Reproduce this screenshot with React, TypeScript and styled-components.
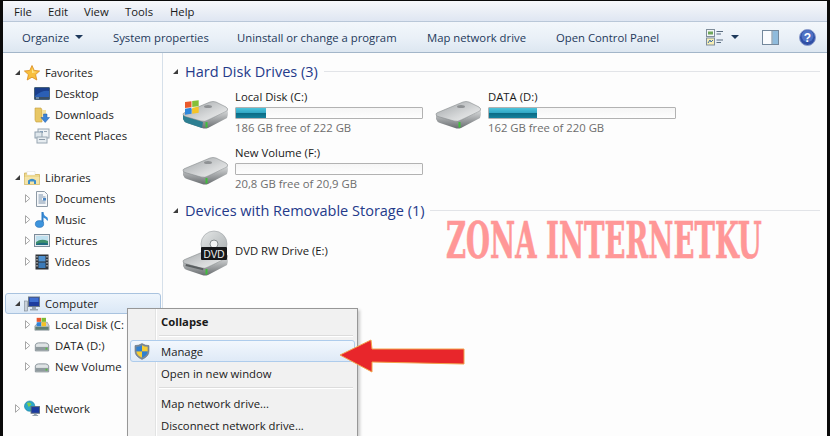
import React from "react";
import styled, { createGlobalStyle } from "styled-components";

const Global = createGlobalStyle`
  html, body { margin: 0; padding: 0; background: #000; }
  body { font-family: "Open Sans", "Noto Sans", "Liberation Sans", sans-serif; font-size: 11.3px; color: #1c1c1c; }
`;

const Window = styled.div`
  position: relative;
  width: 830px;
  height: 436px;
  box-sizing: border-box;
  padding: 1px 3px 0 3px;
  background: #0a0a0a;
  overflow: hidden;
  display: flex;
  flex-direction: column;
`;
const MenuBar = styled.div`
  height: 20px;
  flex: none;
  display: flex;
  align-items: center;
  padding-left: 11px;
  background: linear-gradient(#f7f8fb, #dfe6f2);
  border-bottom: 1px solid #b9c7d8;
`;
const MenuLabel = styled.span<{ $w: number }>`
  width: ${(p) => p.$w}px;
  color: #1a1a1a;
`;
const Toolbar = styled.div`
  height: 31px;
  flex: none;
  display: flex;
  align-items: center;
  box-sizing: border-box;
  padding-left: 19px;
  background: linear-gradient(#f3f7fb, #e9f0f7 55%, #dde7f1);
  border-bottom: 1px solid #a3b6c9;
`;
const ToolButton = styled.span<{ $w: number }>`
  width: ${(p) => p.$w}px;
  flex: none;
  color: #1e395b;
  display: flex;
  align-items: center;
  white-space: nowrap;
`;
const Caret = styled.i<{ $gap: number }>`
  display: inline-block;
  margin-left: ${(p) => p.$gap}px;
  width: 0;
  height: 0;
  border-left: 4px solid transparent;
  border-right: 4px solid transparent;
  border-top: 4px solid #1e395b;
`;
const ToolIcons = styled.div`
  margin-left: 46px;
  display: flex;
  align-items: center;
`;
const ToolGap = styled.span<{ $w: number }>`
  width: ${(p) => p.$w}px;
`;
const Body = styled.div`
  flex: 1;
  display: flex;
  min-height: 0;
  background: #fdfdfd;
`;
const Sidebar = styled.nav`
  width: 159px;
  flex: none;
  border-right: 1px solid #d6e0ea;
  padding-top: 9px;
  display: flex;
  flex-direction: column;
`;
const TreeGroup = styled.div`
  margin-bottom: 21px;
`;
const TreeRow = styled.div<{ $child?: boolean; $selected?: boolean }>`
  height: 21px;
  box-sizing: border-box;
  display: flex;
  align-items: center;
  gap: 3px;
  white-space: nowrap;
  overflow: hidden;
  padding-left: ${(p) => (p.$child ? 18 : 8)}px;
  margin: 0 1px 0 2px;
  border: 1px solid ${(p) => (p.$selected ? "#a9c3df" : "transparent")};
  border-radius: 3px;
  background: ${(p) => (p.$selected ? "linear-gradient(#eef5fc, #dbe8f6)" : "none")};
  & > span { margin-left: 2px; color: #1c1c1c; }
`;
const TreeArrow = styled.svg`
  width: 7px;
  height: 9px;
  flex: none;
`;
const Content = styled.main`
  flex: 1;
  padding: 8px 7px 0 9px;
  min-width: 0;
`;
const SectionHead = styled.div`
  height: 20px;
  display: flex;
  align-items: center;
  gap: 6px;
  color: #243a8a;
  font-size: 14.5px;
  white-space: nowrap;
  &::after { content: ""; flex: 1; height: 1px; background: #e2e4e8; }
`;
const Tiles = styled.div`
  display: grid;
  grid-template-columns: 253px 253px;
  grid-auto-rows: 56px;
  padding: 6px 0 1px 10px;
`;
const Tile = styled.div`
  display: flex;
  gap: 7px;
  align-items: center;
`;
const TileText = styled.div`
  width: 188px;
  display: flex;
  flex-direction: column;
  margin-top: -5px;
`;
const Name = styled.div`
  line-height: 16px;
  margin-bottom: 2px;
  color: #1a1a1a;
`;
const Free = styled.div`
  line-height: 16px;
  margin-top: 1px;
  color: #6d6d6d;
`;
const Bar = styled.div`
  height: 12px;
  box-sizing: border-box;
  border: 1px solid #b2b2b2;
  border-radius: 1px;
  background: linear-gradient(#f5f5f5, #fefefe);
  overflow: hidden;
`;
const BarFill = styled.div`
  height: 100%;
  background: linear-gradient(#4cc4dc 0%, #33a9c6 45%, #0b6c86 55%, #14809c 100%);
`;
const Watermark = styled.div`
  position: absolute;
  left: 446px;
  top: 211px;
  font-family: "DejaVu Serif", "Liberation Serif", serif;
  font-weight: 700;
  font-size: 50px;
  line-height: 60px;
  color: #ff9797;
  white-space: nowrap;
  transform-origin: 0 0;
  transform: scaleX(0.55);
  -webkit-text-stroke: 0.7px #ff9797;
`;
const ContextMenu = styled.div`
  position: absolute;
  left: 127px;
  top: 308px;
  width: 231px;
  height: 140px;
  box-sizing: border-box;
  border: 1px solid #979797;
  background: linear-gradient(to right, #f1f1f1 27px, #e2e3e3 27px, #e2e3e3 28px, #fff 28px, #fff 29px, #f1f1f1 29px);
  padding: 1px 2px;
  box-shadow: 2px 2px 3px rgba(0,0,0,.2);
`;
const MenuItem = styled.div<{ $bold?: boolean; $hover?: boolean }>`
  height: 22px;
  box-sizing: border-box;
  display: flex;
  align-items: center;
  position: relative;
  padding-left: 30px;
  font-weight: ${(p) => (p.$bold ? 700 : 400)};
  color: #1a1a1a;
  border: 1px solid ${(p) => (p.$hover ? "#aeccec" : "transparent")};
  border-radius: 3px;
  background: ${(p) => (p.$hover ? "linear-gradient(#f2f7fd, #dfeaf7)" : "none")};
  & > svg { position: absolute; left: 3px; top: 2px; }
`;
const MenuSeparator = styled.div`
  height: 1px;
  margin: 3px 2px 3px 29px;
  background: #dcdcdc;
  border-bottom: 1px solid #fff;
`;
const ArrowOverlay = styled.svg`
  position: absolute;
  left: 338px;
  top: 337px;
`;

const Tree = ({ open }: { open: boolean }) =>
  open ? (
    <TreeArrow viewBox="0 0 7 9"><path d="M1 7 L6 2 V7 Z" fill="#3c3c3c" /></TreeArrow>
  ) : (
    <TreeArrow viewBox="0 0 7 9"><path d="M1.5 0.7 L5.8 4.5 L1.5 8.3 Z" fill="#fff" stroke="#a6a6a6" /></TreeArrow>
  );

const Star = () => (
  <svg width="16" height="16" viewBox="0 0 16 16"><path d="M8 0.5 L10.2 5.4 L15.6 6 L11.6 9.6 L12.8 15 L8 12.2 L3.2 15 L4.4 9.6 L0.4 6 L5.8 5.4 Z" fill="#f8bf3c" stroke="#d98a1e" strokeWidth=".8" /><path d="M8 3 L9.4 6.5 L13 7 L8 8 Z" fill="#fde68f" /></svg>
);
const Desktop = () => (
  <svg width="16" height="16" viewBox="0 0 16 16"><rect x=".5" y="1.5" width="15" height="12" rx=".5" fill="#2b5fb4" stroke="#46607a" /><path d="M1 10 Q8 4 15 5 V2 H1 Z" fill="#1b3f8c" /><rect x="1" y="11" width="14" height="2" fill="#3a4f63" /><rect x="2" y="11.5" width="3" height="1" fill="#9fc3e8" /></svg>
);
const Downloads = () => (
  <svg width="16" height="16" viewBox="0 0 16 16"><path d="M1 1 H7 L8 3 V15 H2 L1 13 Z" fill="#e8c765" stroke="#c29f3d" strokeWidth=".6" /><path d="M8 3 H12 V9 H8 Z" fill="#f4e2a3" /><path d="M9.5 7 H13 V10.5 H15.5 L11.2 15.5 L7 10.5 H9.5 Z" fill="#3c84d6" stroke="#1e5aa8" strokeWidth=".5" /></svg>
);
const Recent = () => (
  <svg width="16" height="16" viewBox="0 0 16 16"><rect x="4" y="1" width="11" height="9" fill="#eef2f5" stroke="#98a6b2" /><rect x="6" y="3" width="3" height="2" fill="#7f9fbe" /><rect x="10" y="3" width="3" height="1" fill="#9aa8b4" /><rect x="1" y="4" width="7" height="6" fill="#dfe7ec" stroke="#8fa0ae" /><rect x="3" y="9" width="10" height="6" fill="#e6ecf0" stroke="#98a6b2" /><rect x="5" y="11" width="6" height="1" fill="#8b9aa8" /></svg>
);
const Libraries = () => (
  <svg width="16" height="16" viewBox="0 0 16 16"><path d="M0.5 3 H6 L7 4.5 H15.5 V14.5 H0.5 Z" fill="#efd98b" stroke="#c9a94f" strokeWidth=".7" /><path d="M3 1.5 H11 V5 H3 Z" fill="#fff" stroke="#d6d6d6" strokeWidth=".4" /><path d="M0.7 7 H15.3 V14.3 H0.7 Z" fill="#f4e4a8" /><path d="M4 14 V10.5 Q8 7 12 10.5 V14 H10 V11.5 H6 V14 Z" fill="#3e8fcb" /></svg>
);
const Doc = () => (
  <svg width="16" height="16" viewBox="0 0 16 16"><path d="M2.5 .5 H10.5 L13.5 3.5 V15.5 H2.5 Z" fill="#f6f8fa" stroke="#8e9aa6" /><path d="M4.5 4 H9 M4.5 6 H11.5 M4.5 8 H8 M4.5 10 H11.5 M4.5 12 H11.5" stroke="#7e94ac" /><rect x="9" y="7" width="3" height="2.5" fill="#4a86c4" /></svg>
);
const Music = () => (
  <svg width="16" height="18" viewBox="0 0 16 18"><path d="M8.5 1 V12 " stroke="#2f7fc9" strokeWidth="2" /><path d="M9 1 Q10 5 13.5 6.5 Q14.5 8.5 13.5 10 Q12 7 9 6.5 Z" fill="#3a8cd6" /><ellipse cx="5.5" cy="13" rx="4.2" ry="3.4" fill="#3d94dd" stroke="#266fb3" strokeWidth=".6" /></svg>
);
const Pictures = () => (
  <svg width="16" height="14" viewBox="0 0 16 14"><rect x=".5" y=".5" width="15" height="12" fill="#e5eaef" stroke="#7c8c9a" /><rect x="2" y="2" width="12" height="9" fill="#bfe0ef" /><path d="M2 8 Q7 4 14 7 V11 H2 Z" fill="#3f8f6c" /><path d="M2 10 Q8 8 14 9.5 V11 H2 Z" fill="#1f6a80" /></svg>
);
const Videos = () => (
  <svg width="16" height="16" viewBox="0 0 16 16"><rect x="1.5" y=".5" width="13" height="15" fill="#2f3338" /><rect x="4.5" y="2" width="7" height="5.5" fill="#4f91d0" /><rect x="4.5" y="8.5" width="7" height="5.5" fill="#3b7ab8" /><path d="M3 2 V3.5 M3 5 V6.5 M3 8 V9.5 M3 11 V12.5 M13 2 V3.5 M13 5 V6.5 M13 8 V9.5 M13 11 V12.5" stroke="#e6e6e6" /></svg>
);
const Computer = () => (
  <svg width="16" height="16" viewBox="0 0 16 16"><rect x="0.5" y="5" width="3" height="10" fill="#c9d0d8" stroke="#7b8793" strokeWidth=".6" /><rect x="4.5" y="1" width="11" height="9.5" fill="#1f3d9e" stroke="#6e7c8a" /><rect x="5.5" y="2" width="9" height="4" fill="#3f6fd1" /><path d="M8 11 H12 V13 H14 V14.5 H6 V13 H8 Z" fill="#9aa6b2" /></svg>
);
const WinDriveSmall = () => (
  <svg width="16" height="17" viewBox="0 0 18 17"><path d="M1 10 L6 6 H15 L17 10 V15 H1 Z" fill="#c8ced2" stroke="#6f7a82" strokeWidth=".6" /><rect x="1.5" y="11" width="15" height="3.5" fill="#5f7f74" /><rect x="3" y="1" width="5" height="4.5" fill="#e8562c" /><rect x="8.5" y="1" width="5" height="4.5" fill="#7dbb35" /><rect x="3" y="6" width="5" height="4.5" fill="#2f83d8" /><rect x="8.5" y="6" width="5" height="4.5" fill="#f4c224" /></svg>
);
const DriveSmall = () => (
  <svg width="16" height="14" viewBox="0 0 18 14"><path d="M1.5 6 Q2 3.5 5 3.5 H13 Q16 3.5 16.5 6 V12.5 H1.5 Z" fill="#dfe3e5" stroke="#7e8a90" /><rect x="2" y="8" width="14" height="4" fill="#8f9a9e" /><rect x="13" y="9" width="2" height="2" fill="#55c23c" /></svg>
);
const Network = () => (
  <svg width="16" height="17" viewBox="0 0 17 17"><circle cx="6" cy="6" r="5.5" fill="#2ba7c9" stroke="#127a9c" strokeWidth=".6" /><path d="M3 3 Q6 1 8 4 L5 7 Z M7 7 L10 8 L7 11 Z" fill="#7ccd4f" /><rect x="7.5" y="6.5" width="9" height="7" fill="#1a3aa0" stroke="#5c6b7a" /><path d="M10.5 14 H13.5 V15.5 H15 V16.5 H9 V15.5 H10.5 Z" fill="#95a2ae" /></svg>
);
const Shield = () => (
  <svg width="16" height="17" viewBox="0 0 16 17"><path d="M8 .6 Q11 2.6 15 2.6 V8 Q15 13.5 8 16.4 Q1 13.5 1 8 V2.6 Q5 2.6 8 .6 Z" fill="#7d8b99" stroke="#66727e" strokeWidth=".6" /><path d="M8 2.2 V8.4 H2.4 V3.8 Q5.6 3.8 8 2.2 Z" fill="#2f7fd0" /><path d="M8 2.2 Q10.4 3.8 13.6 3.8 V8.4 H8 Z" fill="#f6cd33" /><path d="M2.4 8.4 H8 V14.6 Q3 12.6 2.4 8.4 Z" fill="#f6cd33" /><path d="M8 8.4 H13.6 Q13 12.6 8 14.6 Z" fill="#2f7fd0" /></svg>
);
const ViewsIcon = () => (
  <svg width="18" height="17" viewBox="0 0 18 17"><rect x=".5" y=".5" width="8" height="7" fill="#f4f6f8" stroke="#7f8d9a" /><rect x="2" y="2.5" width="5" height="3" fill="#6ea65a" /><rect x=".5" y="9" width="8" height="7" fill="#f7eeb5" stroke="#7f8d9a" /><path d="M2 14 L4 11 L5 13 L7 11" stroke="#3b6ea8" fill="none" /><path d="M10.5 2.5 H17 M10.5 5 H15 M10.5 11 H17 M10.5 13.5 H15" stroke="#5a6d80" /></svg>
);
const PaneIcon = () => (
  <svg width="17" height="15" viewBox="0 0 17 15"><rect x=".5" y=".5" width="16" height="14" fill="#fafcfe" stroke="#73889c" /><rect x="10.5" y="1" width="5.5" height="13" fill="#8fbbdc" /><path d="M10 1 V14" stroke="#73889c" /></svg>
);
const HelpIcon = () => (
  <svg width="17" height="17" viewBox="0 0 17 17"><circle cx="8.5" cy="8.5" r="8" fill="#2f4fa6" stroke="#8a9ccc" /><circle cx="8.5" cy="7" r="6" fill="#4f72c4" /><text x="8.5" y="13" textAnchor="middle" fontFamily="Liberation Sans" fontWeight="700" fontSize="12" fill="#fff">?</text></svg>
);

const DriveDefs = () => (
  <defs>
    <linearGradient id="dtop" x1="0" y1="0" x2="1" y2="1"><stop offset="0" stopColor="#9fa3a6" /><stop offset=".6" stopColor="#d6d8d9" /><stop offset="1" stopColor="#f2f3f3" /></linearGradient>
    <linearGradient id="dside" x1="0" y1="0" x2="0" y2="1"><stop offset="0" stopColor="#d4d6d7" /><stop offset="1" stopColor="#6a6e71" /></linearGradient>
  </defs>
);
const DriveBody = () => (
  <>
    <path d="M1 15 L1 19 Q2 22 5 23 L20 28 Q23 29 26 28 L45 18 Q46 16 46 11 L23 21 Z" fill="url(#dside)" />
    <path d="M1 14 Q1 13 4 12 L28 2 Q31 1 34 2 L44 7 Q47 9 45 11 L26 20 Q23 22 19 21 L3 16.5 Q1 16 1 14 Z" fill="url(#dtop)" stroke="#85898c" strokeWidth=".6" />
    <ellipse cx="26" cy="6.5" rx="4" ry="1.6" fill="#777b7e" opacity=".7" />
    <rect x="23.5" y="22" width="2" height="5.5" fill="#3fbf3a" />
  </>
);
const Drive = () => (
  <svg width="46" height="30" viewBox="0 0 46 30"><DriveDefs /><DriveBody /></svg>
);
const WinDrive = () => (
  <svg width="46" height="30" viewBox="0 0 46 30">
    <DriveDefs /><DriveBody />
    <path d="M1 15 L1 19 Q2 22 5 23 L20 28 L21 22 L3 16.5 Z" fill="#2d7f92" />
    <g transform="skewY(-8)">
      <rect x="3" y="2.5" width="6.5" height="6" fill="#ea5a2c" />
      <rect x="10.2" y="2.5" width="6.5" height="6" fill="#86bf38" />
      <rect x="3" y="9.2" width="6.5" height="6" fill="#2f88dc" />
      <rect x="10.2" y="9.2" width="6.5" height="6" fill="#f5c426" />
    </g>
  </svg>
);
const DvdDrive = () => (
  <svg width="46" height="48" viewBox="0 0 46 48">
    <defs>
      <linearGradient id="disc" x1="0" y1="0" x2="1" y2="1"><stop offset="0" stopColor="#e6e8e8" /><stop offset="1" stopColor="#a6acae" /></linearGradient>
    </defs>
    <g transform="translate(0 17)">
      <DriveDefs /><DriveBody />
      <rect x="4" y="17" width="18" height="2" fill="#5a5e60" transform="rotate(14 4 17)" />
    </g>
    <circle cx="32" cy="14" r="13" fill="url(#disc)" stroke="#9aa0a2" strokeWidth=".6" />
    <circle cx="32" cy="14" r="4" fill="#f3f4f4" stroke="#868c8e" />
    <rect x="19" y="17" width="26" height="13" rx="1" fill="#17181a" />
    <text x="32" y="27.5" textAnchor="middle" fontFamily="Liberation Sans" fontSize="10" fill="#f0f0f0">DVD</text>
  </svg>
);

const tree: { icon: React.ReactNode; label: string; child?: boolean; open?: boolean; arrow?: boolean; selected?: boolean }[][] = [
  [
    { icon: <Star />, label: "Favorites", open: true, arrow: true },
    { icon: <Desktop />, label: "Desktop", child: true },
    { icon: <Downloads />, label: "Downloads", child: true },
    { icon: <Recent />, label: "Recent Places", child: true },
  ],
  [
    { icon: <Libraries />, label: "Libraries", open: true, arrow: true },
    { icon: <Doc />, label: "Documents", child: true, arrow: true },
    { icon: <Music />, label: "Music", child: true, arrow: true },
    { icon: <Pictures />, label: "Pictures", child: true, arrow: true },
    { icon: <Videos />, label: "Videos", child: true, arrow: true },
  ],
  [
    { icon: <Computer />, label: "Computer", open: true, arrow: true, selected: true },
    { icon: <WinDriveSmall />, label: "Local Disk (C:", child: true, arrow: true },
    { icon: <DriveSmall />, label: "DATA (D:)", child: true, arrow: true },
    { icon: <DriveSmall />, label: "New Volume", child: true, arrow: true },
  ],
  [{ icon: <Network />, label: "Network", arrow: true }],
];

const DriveTile = ({ icon, name, free, pct }: { icon: React.ReactNode; name: string; free?: string; pct?: number }) => (
  <Tile>
    {icon}
    <TileText>
      <Name>{name}</Name>
      {free && (
        <>
          <Bar><BarFill style={{ width: `${pct}%` }} /></Bar>
          <Free>{free}</Free>
        </>
      )}
    </TileText>
  </Tile>
);

export default function App() {
  return (
    <Window>
      <Global />
      <MenuBar>
        <MenuLabel $w={34}>File</MenuLabel>
        <MenuLabel $w={36}>Edit</MenuLabel>
        <MenuLabel $w={41}>View</MenuLabel>
        <MenuLabel $w={45}>Tools</MenuLabel>
        <MenuLabel $w={40}>Help</MenuLabel>
      </MenuBar>
      <Toolbar>
        <ToolButton $w={91}>Organize<Caret $gap={6} /></ToolButton>
        <ToolButton $w={124}>System properties</ToolButton>
        <ToolButton $w={190}>Uninstall or change a program</ToolButton>
        <ToolButton $w={129}>Map network drive</ToolButton>
        <ToolButton $w={104}>Open Control Panel</ToolButton>
        <ToolIcons>
          <ViewsIcon />
          <Caret $gap={7} />
          <ToolGap $w={23} />
          <PaneIcon />
          <ToolGap $w={20} />
          <HelpIcon />
        </ToolIcons>
      </Toolbar>
      <Body>
        <Sidebar>
          {tree.map((group, i) => (
            <TreeGroup key={i}>
              {group.map((r) => (
                <TreeRow key={r.label} $child={r.child} $selected={r.selected}>
                  {r.arrow ? <Tree open={!!r.open} /> : <TreeArrow viewBox="0 0 7 9" />}
                  {r.icon}
                  <span>{r.label}</span>
                </TreeRow>
              ))}
            </TreeGroup>
          ))}
        </Sidebar>
        <Content>
          <SectionHead><Tree open /> Hard Disk Drives (3)</SectionHead>
          <Tiles>
            <DriveTile icon={<WinDrive />} name="Local Disk (C:)" free="186 GB free of 222 GB" pct={16} />
            <DriveTile icon={<Drive />} name="DATA (D:)" free="162 GB free of 220 GB" pct={26} />
            <DriveTile icon={<Drive />} name="New Volume (F:)" free="20,8 GB free of 20,9 GB" pct={0} />
          </Tiles>
          <SectionHead><Tree open /> Devices with Removable Storage (1)</SectionHead>
          <Tiles>
            <DriveTile icon={<DvdDrive />} name="DVD RW Drive (E:)" />
          </Tiles>
        </Content>
      </Body>
      <Watermark>ZONA INTERNETKU</Watermark>
      <ContextMenu>
        <MenuItem $bold>Collapse</MenuItem>
        <MenuSeparator />
        <MenuItem $hover><Shield />Manage</MenuItem>
        <MenuItem>Open in new window</MenuItem>
        <MenuSeparator />
        <MenuItem>Map network drive...</MenuItem>
        <MenuItem>Disconnect network drive...</MenuItem>
      </ContextMenu>
      <ArrowOverlay width="130" height="38" viewBox="0 0 130 38">
        <path d="M2 18 L33 3 L34 12 L126 12 V27 L34 25 V35 Z" fill="#e8262b" stroke="#f2a24a" strokeWidth="1" />
      </ArrowOverlay>
    </Window>
  );
}
